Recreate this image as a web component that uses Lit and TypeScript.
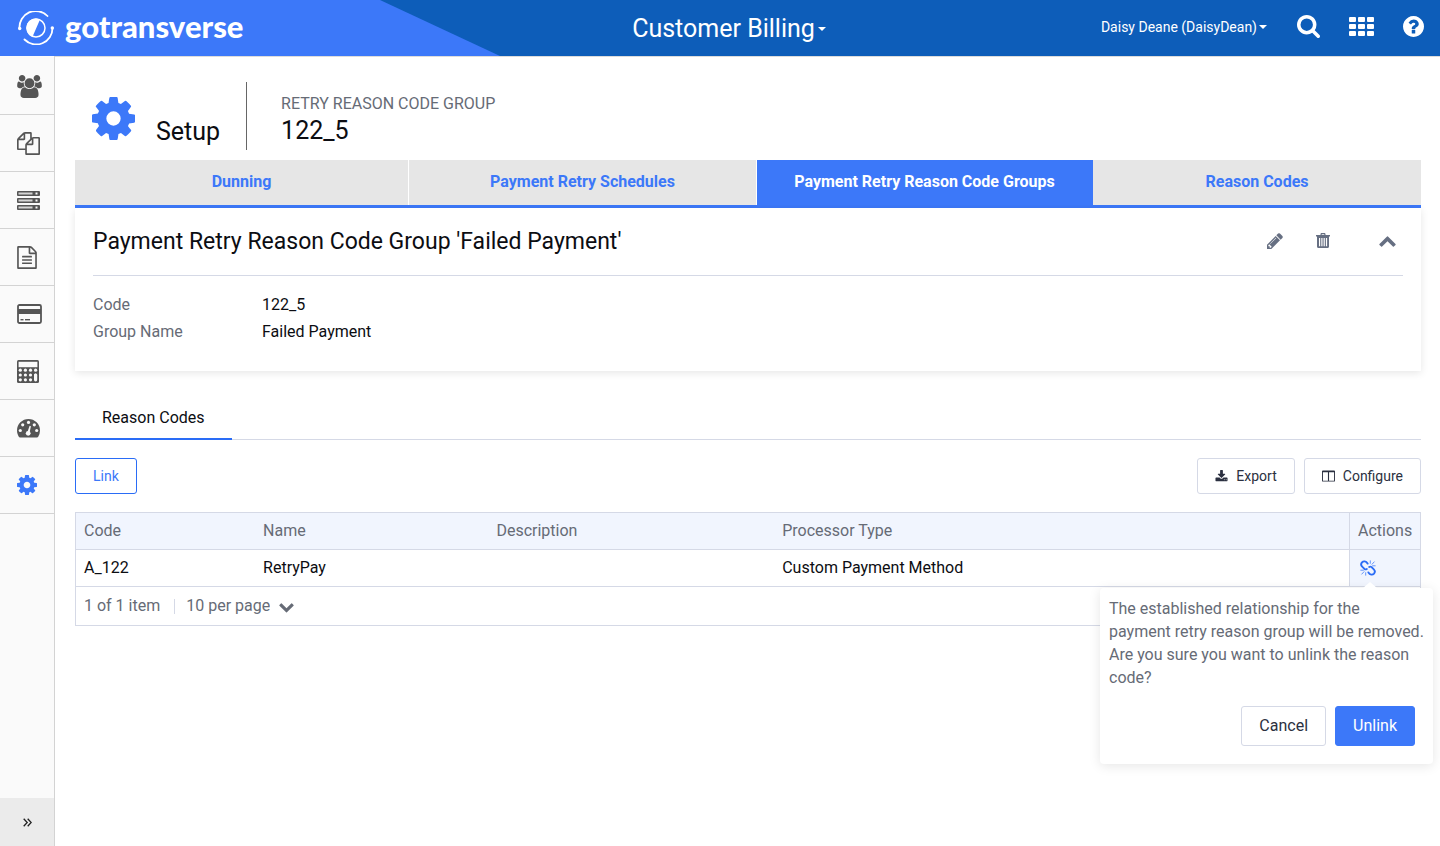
import { LitElement, html, css, svg, nothing } from "lit";
import type { TemplateResult } from "lit";
import { customElement, state } from "lit/decorators.js";
import { classMap } from "lit/directives/class-map.js";

const P = {
  search:
    "M1216 832q0-185-131.5-316.5t-316.5-131.5-316.5 131.5-131.5 316.5 131.5 316.5 316.5 131.5 316.5-131.5 131.5-316.5zm512 832q0 52-38 90t-90 38q-54 0-90-38l-343-342q-179 124-399 124-143 0-273.5-55.5t-225-150-150-225-55.5-273.5 55.5-273.5 150-225 225-150 273.5-55.5 273.5 55.5 225 150 150 225 55.5 273.5q0 220-124 399l343 343q37 37 37 90z",
  cog: "M1152 896q0-106-75-181t-181-75-181 75-75 181 75 181 181 75 181-75 75-181zm512-109v222q0 12-8 23t-20 13l-185 28q-19 54-39 91 35 50 107 138 10 12 10 25t-9 23q-27 37-99 108t-94 71q-12 0-26-9l-138-108q-44 23-91 38-16 136-29 186-7 28-36 28h-222q-14 0-24.5-8.5t-11.5-21.5l-28-184q-49-16-90-37l-141 107q-10 9-25 9-14 0-25-11-126-114-165-168-7-10-7-23 0-12 8-23 15-21 51-66.5t54-70.5q-27-50-41-99l-183-27q-13-2-21-12.5t-8-23.5v-222q0-12 8-23t19-13l186-28q14-46 39-92-40-57-107-138-10-12-10-24 0-10 9-23 26-36 98.5-107.5t94.5-71.5q13 0 26 10l138 107q44-23 91-38 16-136 29-186 7-28 36-28h222q14 0 24.5 8.5t11.5 21.5l28 184q49 16 90 37l142-107q9-9 24-9 13 0 25 10 129 119 165 170 7 8 7 22 0 12-8 23-15 21-51 66.5t-54 70.5q26 50 41 98l183 28q13 2 21 12.5t8 23.5z",
  help: "M1024 1376v-192q0-14-9-23t-23-9h-192q-14 0-23 9t-9 23v192q0 14 9 23t23 9h192q14 0 23-9t9-23zm256-672q0-88-55.5-163t-138.5-116-170-41q-243 0-371 213-15 24 8 42l132 100q7 6 19 6 16 0 25-12 53-68 86-92 34-24 86-24 48 0 85.5 26t37.5 59q0 38-20 61t-68 45q-63 28-115.5 86.5t-52.5 125.5v36q0 14 9 23t23 9h192q14 0 23-9t9-23q0-19 21.5-49.5t54.5-49.5q32-18 49-28.5t46-35 44.5-48 28-60.5 12.5-81zm384 192q0 209-103 385.5t-279.5 279.5-385.5 103-385.5-103-279.5-279.5-103-385.5 103-385.5 279.5-279.5 385.5-103 385.5 103 279.5 279.5 103 385.5z",
  down: "M1683 808l-742 741q-19 19-45 19t-45-19l-742-741q-19-19-19-45.5t19-45.5l166-165q19-19 45-19t45 19l531 531 531-531q19-19 45-19t45 19l166 165q19 19 19 45.5t-19 45.5z",
  up: "M1683 1331l-166 165q-19 19-45 19t-45-19l-531-531-531 531q-19 19-45 19t-45-19l-166-165q-19-19-19-45.5t19-45.5l742-741q19-19 45-19t45 19l742 741q19 19 19 45.5t-19 45.5z",
  download:
    "M1344 1344q0-26-19-45t-45-19-45 19-19 45 19 45 45 19 45-19 19-45zm256 0q0-26-19-45t-45-19-45 19-19 45 19 45 45 19 45-19 19-45zm128-224v320q0 40-28 68t-68 28h-1472q-40 0-68-28t-28-68v-320q0-40 28-68t68-28h465l135 136q58 56 136 56t136-56l136-136h464q40 0 68 28t28 68zm-325-569q17 41-14 70l-448 448q-18 19-45 19t-45-19l-448-448q-31-29-14-70 17-39 59-39h256v-448q0-26 19-45t45-19h256q26 0 45 19t19 45v448h256q42 0 59 39z",
  pencil:
    "M491 1536l91-91-235-235-91 91v107h128v128h107zm523-928q0-22-22-22-10 0-17 7l-542 542q-7 7-7 17 0 22 22 22 10 0 17-7l542-542q7-7 7-17zm-54-192l416 416-832 832h-416v-416zm683 96q0 53-37 90l-166 166-416-416 166-165q36-38 90-38 53 0 91 38l235 234q37 39 37 91z",
  users:
    "M529 896q-162 5-265 128h-134q-82 0-138-40.5t-56-118.5q0-353 124-353 6 0 43.5 21t97.5 42.5 119 21.5q67 0 133-23-5 37-5 66 0 139 81 256zm1071 637q0 120-73 189.5t-194 69.5h-874q-121 0-194-69.5t-73-189.5q0-53 3.5-103.5t14-109 26.5-108.5 43-97.5 62-81 85.5-53.5 111.5-20q10 0 43 21.5t73 48 107 48 135 21.5 135-21.5 107-48 73-48 43-21.5q61 0 111.5 20t85.5 53.5 62 81 43 97.5 26.5 108.5 14 109 3.5 103.5zm-1024-1277q0 106-75 181t-181 75-181-75-75-181 75-181 181-75 181 75 75 181zm704 384q0 159-112.5 271.5t-271.5 112.5-271.5-112.5-112.5-271.5 112.5-271.5 271.5-112.5 271.5 112.5 112.5 271.5zm576 225q0 78-56 118.5t-138 40.5h-134q-103-123-265-128 81-117 81-256 0-29-5-66 66 23 133 23 59 0 119-21.5t97.5-42.5 43.5-21q124 0 124 353zm-128-609q0 106-75 181t-181 75-181-75-75-181 75-181 181-75 181 75 75 181z",
  files:
    "M1696 384q40 0 68 28t28 68v1216q0 40-28 68t-68 28h-960q-40 0-68-28t-28-68v-288h-544q-40 0-68-28t-28-68v-672q0-40 20-88t48-76l408-408q28-28 76-48t88-20h416q40 0 68 28t28 68v328q68-40 128-40h416zm-544 213l-299 299h299v-299zm-640-384l-299 299h299v-299zm196 647l316-316v-416h-384v416q0 40-28 68t-68 28h-416v640h512v-256q0-40 20-88t48-76zm956 804v-1152h-384v416q0 40-28 68t-68 28h-416v640h896z",
  doc: "M1596 380q28 28 48 76t20 88v1152q0 40-28 68t-68 28h-1344q-40 0-68-28t-28-68v-1600q0-40 28-68t68-28h896q40 0 88 20t76 48zm-444-244v376h376q-10-29-22-41l-313-313q-12-12-41-22zm384 1528v-1024h-416q-40 0-68-28t-28-68v-416h-768v1536h1280zm-1024-864q0-14 9-23t23-9h704q14 0 23 9t9 23v64q0 14-9 23t-23 9h-704q-14 0-23-9t-9-23v-64zm736 224q14 0 23 9t9 23v64q0 14-9 23t-23 9h-704q-14 0-23-9t-9-23v-64q0-14 9-23t23-9h704zm0 256q14 0 23 9t9 23v64q0 14-9 23t-23 9h-704q-14 0-23-9t-9-23v-64q0-14 9-23t23-9h704z",
};

const glyph = (d: string, w: number, h = w, box = "0 0 1792 1792") =>
  html`<svg width=${w} height=${h} viewBox=${box} fill="currentColor" aria-hidden="true"><path d=${d} /></svg>`;

const drawn = (w: number, h: number, body: TemplateResult | unknown, box = `0 0 ${w} ${h}`) =>
  html`<svg width=${w} height=${h} viewBox=${box} fill="currentColor" aria-hidden="true">${body}</svg>`;

const server = drawn(
  23,
  19,
  svg`${[0, 7, 14].map(
    (y) => svg`<rect x="0" y=${y} width="23" height="5" rx="1" />
      <rect x="1.5" y=${y + 1.5} width="14" height="2" fill="#d4d4d4" />
      <rect x="18.5" y=${y + 1.5} width="2" height="2" fill="#fafafa" />`
  )}`
);

const card = drawn(
  25,
  20,
  svg`<rect x="1" y="1" width="23" height="18" rx="1.5" fill="none" stroke="currentColor" stroke-width="1.8" />
    <rect x="1" y="5" width="23" height="5" /><rect x="3.5" y="15" width="3" height="1.4" /><rect x="8" y="15" width="5" height="1.4" />`
);

const calculator = drawn(
  22,
  23,
  svg`<rect x="0" y="0" width="22" height="23" rx="1.5" />
    <rect x="1.6" y="1.8" width="18.8" height="5.4" fill="#fafafa" />
    ${[10.2, 15, 19.8].map((y, r) =>
      [3.3, 8.4, 13.5, 18.6].map((x, c) =>
        r === 2 && c === 3 ? nothing : svg`<circle cx=${x} cy=${y} r="1.6" fill="#fafafa" />`
      )
    )}
    <rect x="17" y="13.4" width="3.2" height="8" rx="1.6" fill="#fafafa" />`
);

const gauge = drawn(
  23,
  19,
  svg`<path d="M11.5 0A11.5 11.5 0 0 0 0 11.5c0 2.3.7 4.4 1.8 6.2.3.5.7.8 1.2.8h17c.5 0 .9-.3 1.2-.8A11.5 11.5 0 0 0 23 11.5 11.5 11.5 0 0 0 11.5 0z" />
    <g fill="#fafafa"><circle cx="3.3" cy="11.5" r="1.6" /><circle cx="5.7" cy="5.8" r="1.6" /><circle cx="11.5" cy="3.4" r="1.6" />
    <circle cx="17.3" cy="5.8" r="1.6" /><circle cx="19.7" cy="11.5" r="1.6" />
    <circle cx="11.2" cy="14.3" r="2.4" /><path d="M10.300 13.500 12.600 6.800 13.900 7.200 12.400 14.500z" /></g>`
);

const unlink = drawn(
  16,
  16,
  svg`<g fill="none" stroke="currentColor" stroke-linecap="round">
    <path stroke-width="1.9" d="M7.600 3.600C6 1 3.500.8 2 2.400.8 3.800 1 5.400 2.200 6.600L4.400 8.800C5 9.400 6 9.500 6.800 9" />
    <path stroke-width="1.900" d="M8.400 12.400C10 15 12.500 15.200 14 13.600 15.200 12.200 15 10.600 13.800 9.400L11.600 7.200C11 6.600 10 6.500 9.200 7" />
    <path stroke-width=".7" d="M10.300 3.300V.8M12 4.300l2.200-2.400M12.600 5.800h2.600M5.700 12.700v2.500M4 11.700l-2.200 2.400M3.400 10.200H.8" /></g>`
);

const logo = drawn(
  36,
  34,
  svg`<g fill="none" stroke="currentColor" stroke-width="1.8" stroke-linecap="round">
    <path d="M1.500 17.500A16.300 16.300 0 0 1 29.500 5" /><path d="M34.500 17A16.300 16.300 0 0 1 6.500 28.500" />
    <circle cx="18" cy="17" r="9" stroke-width="1.5" /></g>
    <path d="M22 8.500A9.400 9.400 0 1 0 14.500 25.700z" /><circle cx="1.7" cy="17.5" r="1.7" /><circle cx="34.3" cy="17" r="1.7" />`
);

const trash = drawn(
  14,
  15,
  svg`<path fill-rule="evenodd" d="M4.500 2V1.200C4.500.5 5 0 5.700 0h2.600c.7 0 1.200.5 1.200 1.200V2H14v1.500h-1V13.500c0 .8-.6 1.500-1.400 1.500H2.400C1.600 15 1 14.300 1 13.500V3.500H0V2zM5.700 2h2.600V1.200H5.700zM3 5v8.300h1.200V5zM5.300 5v8.300h1.200V5zM7.600 5v8.300h1.200V5zM9.900 5v8.300h1.200V5z" />`
);

const columns = drawn(
  13,
  12,
  svg`<path fill-rule="evenodd" d="M1 0h12a1 1 0 0 1 1 1v10a1 1 0 0 1-1 1H1a1 1 0 0 1-1-1V1a1 1 0 0 1 1-1zM1 2v9h5.400V2zM7.600 2v9H13V2z" />`,
  "0 0 14 12"
);

const apps = drawn(
  25,
  19,
  svg`${[0, 7, 14].map((y) => [0, 9, 18].map((x) => svg`<rect x=${x} y=${y} width="7" height="5" rx="1" />`))}`
);

@customElement("app-header")
export class AppHeader extends LitElement {
  static styles = css`
    :host {
      display: block;
      color: #fff;
    }
    .bar {
      display: grid;
      grid-template-columns: 1fr auto 1fr;
      align-items: center;
      height: 56px;
      box-sizing: border-box;
      padding-left: 18px;
      background: #0d5db9;
      position: relative;
      isolation: isolate;
    }
    .bar::before {
      content: "";
      position: absolute;
      z-index: -1;
      inset: 0 auto 0 0;
      width: 500px;
      background: #3c78f9;
      clip-path: polygon(0 0, 380px 0, 500px 100%, 0 100%);
    }
    .brand {
      display: flex;
      align-items: center;
      gap: 11px;
      color: #fff;
      text-decoration: none;
      font: 900 31px/32px Lato, sans-serif;
    }
    .brand span {
      padding-bottom: 4px;
    }
    button {
      display: flex;
      align-items: center;
      margin: 0;
      padding: 0;
      border: 0;
      background: none;
      color: inherit;
      font: inherit;
    }
    .product {
      padding-top: 1px;
      font-size: 25px;
      line-height: 32px;
      gap: 3px;
    }
    .user {
      font-size: 14px;
      line-height: 20px;
      gap: 2px;
      margin-right: 30px;
    }
    .caret {
      border: 4px solid transparent;
      border-top-color: #fff;
      border-bottom: 0;
    }
    .tools {
      display: flex;
      align-items: center;
      justify-content: flex-end;
      padding: 0 16px 3px 0;
    }
    .tools svg {
      display: block;
    }
    .apps {
      margin: 0 29px;
    }
  `;
  render() {
    return html`<header class="bar">
      <a class="brand" href="#home">${logo}<span>gotransverse</span></a>
      <button class="product">Customer Billing<i class="caret"></i></button>
      <div class="tools">
        <button class="user">Daisy Deane (DaisyDean)<i class="caret"></i></button>
        <button aria-label="Search">${glyph(P.search, 23, 23, "64 128 1664 1664")}</button>
        <button class="apps" aria-label="Applications">${apps}</button>
        <button aria-label="Help">${glyph(P.help, 21, 21, "128 128 1536 1536")}</button>
      </div>
    </header>`;
  }
}

@customElement("app-sidebar")
export class AppSidebar extends LitElement {
  static styles = css`
    :host {
      display: flex;
      flex-direction: column;
      width: 54px;
      border-right: 1px solid #d3d3d3;
      background: #fafafa;
      color: #555;
    }
    nav {
      flex: 1;
      padding-top: 2px;
    }
    a {
      display: flex;
      align-items: center;
      height: 56px;
      padding-left: 17px;
      border-bottom: 1px solid #d3d3d3;
      color: inherit;
    }
    .current {
      color: #3c78f9;
    }
    button {
      display: grid;
      place-items: center;
      height: 48px;
      padding: 0;
      border: 0;
      background: #ebebeb;
      color: #222;
    }
  `;
  render() {
    const items: [string, TemplateResult][] = [
      ["Customers", glyph(P.users, 25, 23, "-64 0 1920 1792")],
      ["Orders", glyph(P.files, 23)],
      ["Products", server],
      ["Invoices", glyph(P.doc, 20, 23, "128 0 1536 1792")],
      ["Payments", card],
      ["Accounting", calculator],
      ["Dashboards", gauge],
      ["Setup", glyph(P.cog, 20, 20, "128 128 1536 1536")],
    ];
    return html`<nav>
        ${items.map(
          ([name, icon]) =>
            html`<a class=${classMap({ current: name === "Setup" })} href="#${name.toLowerCase()}" aria-label=${name}>${icon}</a>`
        )}
      </nav>
      <button aria-label="Expand menu">
        ${drawn(9, 9, svg`<path fill="none" stroke="currentColor" stroke-width="1.3" d="M.7.7 4.200 4.500.7 8.300M4.700.7 8.200 4.500 4.700 8.300" />`)}
      </button>`;
  }
}

@customElement("unlink-popover")
export class UnlinkPopover extends LitElement {
  static styles = css`
    :host {
      display: block;
      box-sizing: border-box;
      width: 333px;
      padding: 9px 9px 18px;
      border-radius: 4px;
      background: #fff;
      box-shadow: 0 2px 12px rgba(0, 0, 0, 0.1);
      color: #666b76;
      white-space: normal;
    }
    .arrow {
      position: absolute;
      left: 263px;
      top: -6px;
      border: 7px solid transparent;
      border-top: 0;
      border-bottom: 6px solid #fff;
    }
    p {
      margin: 0 -6px 0 0;
      font-size: 16px;
      line-height: 23px;
    }
    .buttons {
      display: flex;
      justify-content: flex-end;
      gap: 9px;
      margin: 17px 9px 0 0;
    }
    button {
      height: 40px;
      padding: 0 17px;
      border: 1px solid #d5d9e6;
      border-radius: 3px;
      background: #fff;
      color: #2b3040;
      font: 400 16px/20px Roboto, sans-serif;
    }
    .primary {
      border-color: #3c78f9;
      background: #3c78f9;
      color: #fff;
    }
  `;
  render() {
    return html`<i class="arrow"></i>
      <p>
        The established relationship for the<br />payment retry reason group will be removed. Are you sure you want to
        unlink the reason code?
      </p>
      <div class="buttons">
        <button @click=${() => this.dispatchEvent(new Event("close"))}>Cancel</button>
        <button class="primary" @click=${() => this.dispatchEvent(new Event("close"))}>Unlink</button>
      </div>`;
  }
}

@customElement("app-root")
export class AppRoot extends LitElement {
  @state() private asking = true;

  static styles = css`
    :host {
      display: flex;
      flex-direction: column;
      min-height: 100vh;
      background: #fff;
      color: #0c0d12;
      font: 400 16px/20px Roboto, sans-serif;
    }
    .body {
      display: flex;
      flex: 1;
    }
    main {
      flex: 1;
      min-width: 0;
      padding: 25px 19px 20px 20px;
      border-top: 1px solid #dcdcdc;
    }
    h1,
    h2,
    p,
    dl,
    dd {
      margin: 0;
      font-weight: 400;
    }
    button {
      font: inherit;
      color: inherit;
    }
    .masthead {
      display: flex;
      height: 68px;
      margin-bottom: 10px;
    }
    .area {
      display: flex;
      align-items: flex-end;
      gap: 21px;
      padding: 0 26px 2px 17px;
      border-right: 1px solid #666;
    }
    .area svg {
      color: #3c78f9;
      margin-bottom: 8px;
    }
    .area h1,
    .record h2 {
      font-size: 25px;
      line-height: 34px;
    }
    .area h1 {
      line-height: 32px;
    }
    .record {
      padding: 12px 0 0 34px;
    }
    .record p,
    dt,
    th,
    .pager {
      color: #666b76;
    }
    .sections {
      display: grid;
      grid-template-columns: 334fr 348fr 336fr 328fr;
      border-bottom: 3px solid #3c78f9;
    }
    .sections a {
      padding: 12px 0 13px;
      border-right: 1px solid #fff;
      background: #e6e6e6;
      color: #3c78f9;
      font-weight: 700;
      text-align: center;
      text-decoration: none;
    }
    .sections a:last-child {
      border-right: 0;
    }
    .sections .current {
      border-color: #3c78f9;
      background: #3c78f9;
      color: #fff;
    }
    .card {
      padding: 0 18px 29px;
      box-shadow: 0 2px 8px rgba(0, 0, 0, 0.1);
    }
    .card header {
      display: flex;
      align-items: center;
      height: 67px;
      border-bottom: 1px solid #d5d9e6;
      color: #666f82;
    }
    .card h2 {
      flex: 1;
      color: #0c0d12;
      font-size: 23px;
      line-height: 32px;
    }
    .icon {
      display: inline-flex;
      padding: 0;
      border: 0;
      background: none;
    }
    .card .icon {
      padding-bottom: 2px;
    }
    .card .icon:nth-of-type(2) {
      margin: 0 49px 0 33px;
    }
    .card .icon:nth-of-type(3) {
      margin-right: 7px;
    }
    dl {
      display: grid;
      grid-template-columns: 169px 1fr;
      row-gap: 7px;
      padding-top: 19px;
    }
    .tabs {
      display: flex;
      margin-top: 27px;
      border-bottom: 1px solid #d5d9e6;
    }
    .tabs a {
      margin-bottom: -1px;
      padding: 10px 27px;
      border-bottom: 2px solid #2a6cf6;
      color: inherit;
      text-decoration: none;
    }
    .toolbar {
      display: flex;
      gap: 9px;
      padding: 18px 0;
    }
    .toolbar button {
      display: flex;
      align-items: center;
      gap: 8px;
      height: 36px;
      padding: 0 17px;
      border: 1px solid #d5d9e6;
      border-radius: 3px;
      background: #fff;
      color: #2b3040;
      font-size: 14px;
    }
    .toolbar .link {
      margin-right: auto;
      border-color: #2a6cf6;
      color: #3c78f9;
    }
    table {
      width: 100%;
      table-layout: fixed;
      border-collapse: collapse;
      border: 1px solid #d5d9e6;
    }
    .code {
      width: 13.35%;
    }
    .name {
      width: 17.35%;
    }
    .desc {
      width: 21.25%;
    }
    .act {
      width: 71px;
      box-sizing: border-box;
    }
    th,
    td {
      height: 37px;
      box-sizing: border-box;
      padding: 0 0 0 8px;
      border-bottom: 1px solid #d5d9e6;
      font-weight: 400;
      text-align: left;
    }
    th,
    .cell {
      background: #f1f5fe;
    }
    th.act,
    .cell {
      border-left: 1px solid #d5d9e6;
    }
    .anchor {
      display: flex;
      position: relative;
      padding-left: 2px;
      color: #2a6cf6;
    }
    unlink-popover {
      position: absolute;
      top: 28px;
      right: -13px;
      z-index: 2;
    }
    .pager {
      display: flex;
      align-items: center;
      height: 38px;
      padding-left: 8px;
      border: 1px solid #d5d9e6;
      border-top: 0;
    }
    .size {
      display: flex;
      align-items: center;
      margin-left: 14px;
      border-left: 1px solid #d5d9e6;
      line-height: 14px;
    }
    select {
      appearance: none;
      margin: -4px 9px -4px 0;
      padding: 0 0 0 11px;
      border: 0;
      background: none;
      color: inherit;
      font: 400 16px/20px Roboto, sans-serif;
    }
  `;

  render() {
    const sections = ["Dunning", "Payment Retry Schedules", "Payment Retry Reason Code Groups", "Reason Codes"];
    return html`<app-header></app-header>
      <div class="body">
        <app-sidebar></app-sidebar>
        <main>
          <div class="masthead">
            <div class="area">${glyph(P.cog, 43, 43, "128 128 1536 1536")}<h1>Setup</h1></div>
            <div class="record">
              <p>RETRY REASON CODE GROUP</p>
              <h2>122_5</h2>
            </div>
          </div>
          <nav class="sections">
            ${sections.map((s, i) => html`<a href="#section-${i}" class=${classMap({ current: i === 2 })}>${s}</a>`)}
          </nav>
          <section class="card">
            <header>
              <h2>Payment Retry Reason Code Group 'Failed Payment'</h2>
              <button class="icon" aria-label="Edit">${glyph(P.pencil, 16, 16, "128 128 1536 1536")}</button>
              <button class="icon" aria-label="Delete">${trash}</button>
              <button class="icon" aria-label="Collapse">${glyph(P.up, 17, 17, "60 60 1672 1672")}</button>
            </header>
            <dl>
              <dt>Code</dt>
              <dd>122_5</dd>
              <dt>Group Name</dt>
              <dd>Failed Payment</dd>
            </dl>
          </section>
          <nav class="tabs"><a href="#codes">Reason Codes</a></nav>
          <div class="toolbar">
            <button class="link">Link</button>
            <button>${glyph(P.download, 13)}Export</button>
            <button>${columns}Configure</button>
          </div>
          <table>
            <thead>
              <tr>
                <th class="code">Code</th>
                <th class="name">Name</th>
                <th class="desc">Description</th>
                <th>Processor Type</th>
                <th class="act">Actions</th>
              </tr>
            </thead>
            <tbody>
              <tr>
                <td>A_122</td>
                <td>RetryPay</td>
                <td></td>
                <td>Custom Payment Method</td>
                <td class="cell">
                  <div class="anchor">
                    <button class="icon" aria-label="Unlink reason code" @click=${() => (this.asking = !this.asking)}>
                      ${unlink}
                    </button>
                    ${this.asking
                      ? html`<unlink-popover @close=${() => (this.asking = false)}></unlink-popover>`
                      : nothing}
                  </div>
                </td>
              </tr>
            </tbody>
          </table>
          <div class="pager">
            <span>1 of 1 item</span>
            <div class="size">
              <select aria-label="Items per page">
                <option>10 per page</option>
              </select>
              ${glyph(P.down, 15, 15, "60 60 1672 1672")}
            </div>
          </div>
        </main>
      </div>`;
  }
}
